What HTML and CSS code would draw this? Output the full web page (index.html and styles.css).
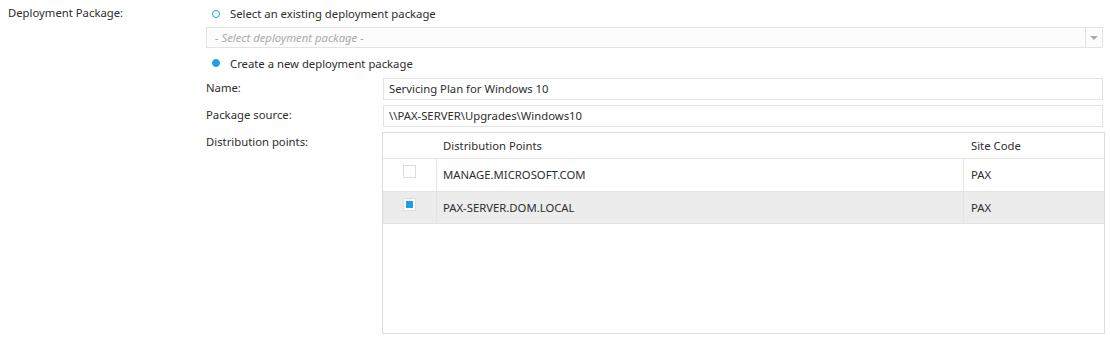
FILE: index.html
```html
<!DOCTYPE html>
<html lang="en">
<head>
<meta charset="UTF-8">
<title>Deployment Package</title>
<link rel="stylesheet" href="styles.css">
</head>
<body>

<div class="form-row">
    <div class="main-label">Deployment Package:</div>

    <div class="main-field">
        <!-- existing package -->
        <label class="radio-row first">
            <span class="radio"></span>
            Select an existing deployment package
        </label>
        <div class="dropdown">
            <span class="placeholder">- Select deployment package -</span>
            <span class="drop-btn"><span class="arrow"></span></span>
        </div>

        <!-- new package -->
        <label class="radio-row">
            <span class="radio checked"></span>
            Create a new deployment package
        </label>

        <div class="sub-grid">
            <div class="sub-label">Name:</div>
            <div class="text-box">Servicing Plan for Windows 10</div>

            <div class="sub-label">Package source:</div>
            <div class="text-box">\\PAX-SERVER\Upgrades\Windows10</div>

            <div class="sub-label">Distribution points:</div>
            <div class="dp-table">
                <div class="dp-head">
                    <span class="col-check"></span>
                    <span class="col-name">Distribution Points</span>
                    <span class="col-site">Site Code</span>
                </div>
                <div class="dp-row">
                    <span class="col-check"><span class="check"></span></span>
                    <span class="col-name">MANAGE.MICROSOFT.COM</span>
                    <span class="col-site">PAX</span>
                </div>
                <div class="dp-row selected">
                    <span class="col-check"><span class="check on"></span></span>
                    <span class="col-name">PAX-SERVER.DOM.LOCAL</span>
                    <span class="col-site">PAX</span>
                </div>
            </div>
        </div>
    </div>
</div>

</body>
</html>
```
FILE: styles.css
```css
:root {
    --blue: #1ba1e2;
    --line: #e3e3e3;
    --text: #2e2e2e;
}

* {
    margin: 0; padding: 0;
    box-sizing: border-box;
}

body {
    background: #fff;
    color: var(--text);
    font-family: 'Noto Sans', 'Liberation Sans', sans-serif;
    font-size: 11.3px;
}

.form-row {
    display: flex;
    width: 1103px;
}

.main-label {
    width: 206px;
    padding: 4px 0 0 8px;
    line-height: 17px;
}

.main-field {
    flex: 1;
    display: flex;
    flex-direction: column;
}

.radio-row {
    display: flex;
    align-items: center;
    gap: 10px;
    height: 30px;
    padding-left: 6px;
}

.radio-row.first {
    height: 27px;
}

.radio {
    width: 8px;
    height: 8px;
    border-radius: 50%;
    border: 1.5px solid var(--blue);
}

.radio.checked {
    background: var(--blue);
}

.dropdown {
    display: flex;
    height: 21px;
    border: 1px solid var(--line);
    background: #fcfcfc;
}

.placeholder {
    flex: 1;
    padding-left: 8px;
    line-height: 19px;
    font-style: italic;
    color: #aaa;
}

.drop-btn {
    width: 17px;
    border-left: 1px solid var(--line);
    display: flex;
    align-items: center;
    justify-content: center;
}

.arrow {
    width: 0; height: 0;
    border-left: 4px solid transparent;
    border-right: 4px solid transparent;
    border-top: 4px solid #aaa;
}

.sub-grid {
    display: grid;
    grid-template-columns: 177px 1fr;
    row-gap: 5px;
}

.sub-label {
    padding-top: 1px;
    line-height: 17px;
}

.text-box {
    height: 22px;
    border: 1px solid var(--line);
    padding-left: 5px;
    line-height: 20px;
}

.dp-table {
    height: 202px;
    margin-left: -1px;
    margin-right: -2px;
    border: 1px solid #dcdcdc;
}

.dp-head, .dp-row {
    display: flex;
    border-bottom: 1px solid var(--line);
}

.dp-head {
    height: 26px;
    align-items: center;
}

.dp-row {
    height: 33px;
}

.dp-row:last-child {
    height: 32px;
}

.dp-row.selected {
    background: #ececec;
}

.col-check {
    width: 54px;
    display: flex;
    justify-content: center;
    padding-top: 6px;
}

.col-name {
    flex: 1;
    padding-left: 6px;
}

.col-site {
    width: 140px;
    padding-left: 7px;
}

.dp-row .col-check,
.dp-row .col-name {
    border-right: 1px solid var(--line);
}

.dp-row .col-name,
.dp-row .col-site {
    line-height: 31px;
}

.check {
    width: 13px;
    height: 13px;
    border: 1px solid #ddd;
    background: #fff;
}

.check.on {
    padding: 2px;
}

.check.on::after {
    content: '';
    display: block;
    width: 100%;
    height: 100%;
    background: var(--blue);
}
```
